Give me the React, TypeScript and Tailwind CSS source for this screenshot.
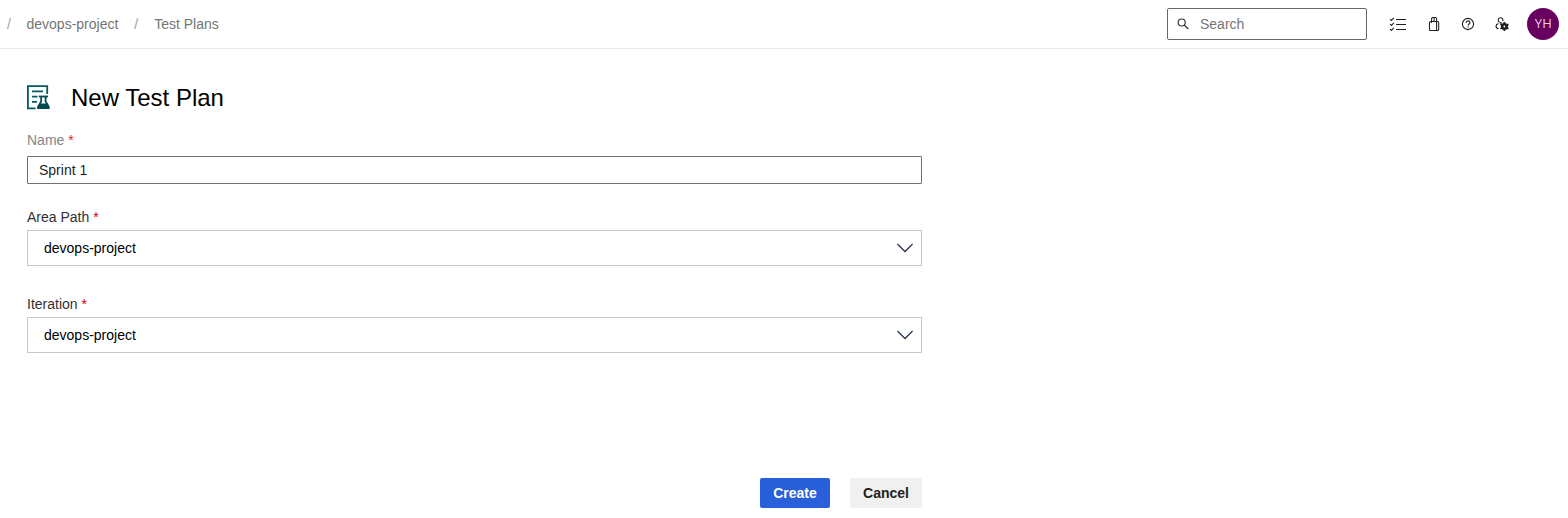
import { useState } from "react";

function SearchIcon() {
  return (
    <svg width="16" height="16" viewBox="0 0 16 16" fill="none" stroke="#323130" strokeWidth="1.15">
      <circle cx="6.7" cy="6.5" r="3.5" />
      <path d="M9.2 9l4.1 4" />
    </svg>
  );
}

function ChecklistIcon() {
  return (
    <svg width="18" height="16" viewBox="0 0 18 16" fill="none" stroke="#201f1e">
      <path d="M7 3.5h10M7 8.5h10M7 13.5h10" />
      <path d="M1.2 3.2l1.2 1.2L4.9 1.9M1.2 8.2l1.2 1.2L4.9 6.9M1.2 13.2l1.2 1.2 2.5-2.5" strokeWidth="1.1" />
    </svg>
  );
}

function MarketplaceIcon() {
  return (
    <svg width="16" height="16" viewBox="0 0 16 16" fill="none" stroke="#201f1e" strokeWidth="1.05">
      <rect x="3.5" y="5.4" width="9.2" height="9.1" rx="1.1" />
      <path d="M5.6 7V2.4l.8-.9h3.4l.8.9v12M8.1 1.8v3.4" />
    </svg>
  );
}

function HelpIcon() {
  return (
    <svg width="16" height="16" viewBox="0 0 16 16" fill="none" stroke="#201f1e" strokeWidth="1.15">
      <circle cx="8" cy="8" r="5.6" />
      <path d="M6.2 6.7c0-2.5 3.7-2.5 3.7-.1 0 1.4-1.8 1.5-1.8 3" />
      <path d="M8.1 10.4v1.2" />
    </svg>
  );
}

function UserSettingsIcon() {
  return (
    <svg width="16" height="16" viewBox="0 0 16 16" fill="none" stroke="#201f1e" strokeWidth="1.1">
      <path d="M5.6 6.4C3.4 5 4 1.8 6.5 1.8c1.9 0 2.9 1.7 2.2 3.2" />
      <path d="M8.2 6.6c-.8.6-1.8.6-2.6-.2M4.4 7.4C1.2 8.4 1.2 12.2 4.6 12.7" />
      <circle cx="10.4" cy="10.5" r="2.2" strokeWidth="2.6" />
      <path
        d="M10.4 5.9v2.4M10.4 12.7v2.4M6.4 8.2l2 1.2M12.4 11.6l2 1.2M6.4 12.8l2-1.2M12.4 9.4l2-1.2"
        strokeWidth="1.7"
      />
    </svg>
  );
}

function TestPlanIcon() {
  return (
    <svg width="24" height="26" viewBox="0 0 24 26" fill="none" stroke="#005b62" strokeWidth="1.8">
      <path d="M20.2 9V1.1H.9v22.2h7.6" />
      <path d="M5 6.3h11M5 11.7h5.5M5 16.9h5" />
      <g stroke="#004b50">
        <path d="M11.8 11.5h9.2" />
        <path
          d="M14.2 12v4.4l-3.1 5.3c-.4.9 0 1.5.8 1.5h9c.8 0 1.2-.6.8-1.5l-3.1-5.3V12"
          strokeLinejoin="round"
        />
        <path d="M13.2 19.3h6.4l1.6 3.5h-9.8z" fill="#004b50" />
      </g>
    </svg>
  );
}

function ChevronDown() {
  return (
    <svg width="16" height="16" viewBox="0 0 16 16" fill="none" stroke="#273447" strokeWidth="1.25">
      <path d="M.4 4L8 11.5 15.6 4" />
    </svg>
  );
}

function Required() {
  return <span className="text-[#cd0014]">*</span>;
}

function PathPicker({ label, value }: { label: string; value: string }) {
  return (
    <div className="flex w-full flex-col">
      <span className="h-5 text-sm leading-5 text-[#323130]">
        {label} <Required />
      </span>
      <button
        type="button"
        aria-label={label}
        className="mt-[3px] flex h-9 w-full items-center justify-between border border-[#c8c8c8] pr-2 pl-4 text-sm text-black"
      >
        <span>{value}</span>
        <ChevronDown />
      </button>
    </div>
  );
}

export default function App() {
  const [name, setName] = useState("Sprint 1");

  return (
    <div className="min-h-[518px] bg-white font-['Liberation_Sans',Arial,sans-serif]">
      <header className="flex h-[49px] items-center justify-between border-b border-[#eaeaea] pr-[9px] pl-[7px]">
        <nav className="flex items-center text-sm text-[#757575]">
          <span className="w-[19.5px] text-[#a19f9d]">/</span>
          <span>devops-project</span>
          <span className="mr-4 ml-4 text-[#a19f9d]">/</span>
          <span>Test Plans</span>
        </nav>
        <div className="flex items-center">
          <label className="flex h-8 w-[200px] items-center gap-[9px] rounded-xs border border-[#666] pl-[7px]">
            <SearchIcon />
            <input
              placeholder="Search"
              className="w-36 text-sm text-[#323130] outline-none placeholder:text-[#767676]"
            />
          </label>
          <div className="ml-[22px] flex items-center">
            <ChecklistIcon />
            <div className="ml-[19px] flex gap-[18px]">
              <MarketplaceIcon />
              <HelpIcon />
              <UserSettingsIcon />
            </div>
          </div>
          <span className="ml-[17px] flex size-8 items-center justify-center rounded-full bg-[#68005f] pl-px font-['Open_Sans',sans-serif] text-[13px] tracking-[0.2px] text-[#ebcfe9]">
            YH
          </span>
        </div>
      </header>

      <main className="ml-[27px] flex w-[895px] flex-col pt-[33px]">
        <div className="flex h-8 items-center gap-5">
          <TestPlanIcon />
          <h1 className="text-2xl leading-8 text-black">New Test Plan</h1>
        </div>
        <label className="mt-4 flex flex-col">
          <span className="h-5 text-sm leading-5 text-[#858585]">
            Name <span className="text-[#e0201b]">*</span>
          </span>
          <input
            value={name}
            onChange={(e) => setName(e.target.value)}
            className="mt-[6px] h-7 w-full rounded-[1px] border border-[#707070] px-[11px] text-sm text-[#201f1e] outline-none"
          />
        </label>
        <div className="mt-[23px] flex flex-col gap-7">
          <PathPicker label="Area Path" value="devops-project" />
          <PathPicker label="Iteration" value="devops-project" />
        </div>
        <div className="mt-[125px] flex justify-end gap-5">
          <button type="button" className="h-[30px] w-[70px] rounded-xs bg-[#2860d9] text-sm font-bold text-white">
            Create
          </button>
          <button type="button" className="h-[30px] w-[72px] rounded-xs bg-[#f0f0f0] text-sm font-bold text-[#201f1e]">
            Cancel
          </button>
        </div>
      </main>
    </div>
  );
}
